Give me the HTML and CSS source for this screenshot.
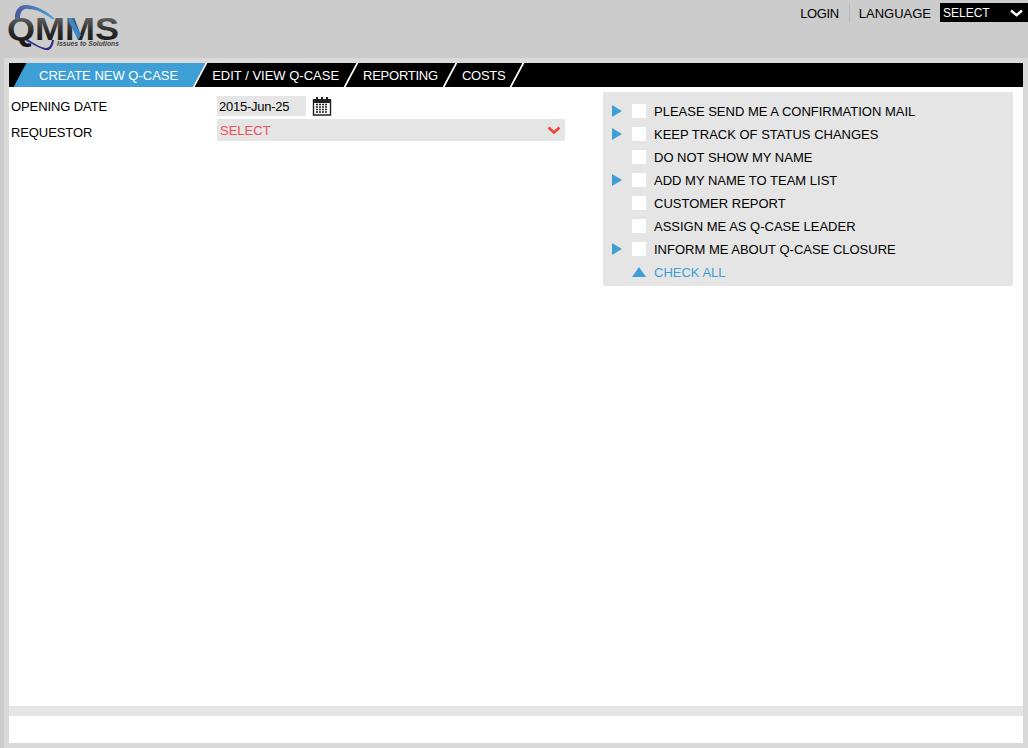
FILE: index.html
```html
<!DOCTYPE html>
<html>
<head>
<title>QMMS - Create new Q-Case</title>
<link rel="stylesheet" href="styles.css">
</head>
<body>
<div class="header">
<svg class="logo" width="125" height="52" viewBox="0 0 125 52">
<defs>
<linearGradient id="letters" x1="0" y1="0" x2="0" y2="1">
<stop offset="0" stop-color="#777"/>
<stop offset="0.55" stop-color="#2a2a2a"/>
<stop offset="1" stop-color="#111"/>
</linearGradient>
<linearGradient id="swoosh" x1="0" y1="0" x2="1" y2="0">
<stop offset="0" stop-color="#4a5a9c"/>
<stop offset="1" stop-color="#4aa3dc"/>
</linearGradient>
</defs>
<path d="M15 19C14 10 20 4 27 5C37 6 47 11 55 19L52 19C44 13 36 9 28 9C23 8 20 12 20 18Z" fill="url(#swoosh)"/>
<path d="M27 39C35 44 42 48 46 48C50 48 51 44 52 40L54 40C53 46 51 51 46 50C40 49 33 44 26 41Z" fill="#2c2f86"/>
<text class="logo-name" x="7" y="40" textLength="112" lengthAdjust="spacingAndGlyphs" fill="url(#letters)">QMMS</text>
<path d="M67 18L72 18L81 35L78 40Z" fill="#3f86c4"/>
<text class="logo-tag" x="57" y="45.5" textLength="62" lengthAdjust="spacingAndGlyphs">Issues to Solutions</text>
</svg>
<div class="top-links">
<a class="login">LOGIN</a>
<a class="language">LANGUAGE</a>
<div class="lang-select">
<span>SELECT</span>
<svg width="13" height="8" viewBox="0 0 13 8"><path d="M1 1.5L6.5 6.2L12 1.5" fill="none" stroke="#fff" stroke-width="2.4"/></svg>
</div>
</div>
</div>
<div class="page">
<div class="tabs">
<a class="tab active">CREATE NEW Q-CASE</a>
<a class="tab">EDIT / VIEW Q-CASE</a>
<a class="tab tab-short">REPORTING</a>
<a class="tab tab-short">COSTS</a>
</div>
<div class="content">
<div class="form">
<div class="form-row date-row">
<label>OPENING DATE</label>
<div class="date-field">2015-Jun-25</div>
<svg class="calendar" width="20" height="20" viewBox="0 0 20 20">
<path d="M1.5 4H18.5V19H1.5Z" fill="#fff" stroke="#222" stroke-width="1.4"/>
<path d="M1 3H19V7H1Z" fill="#222"/>
<path d="M5 1V5M10 1V5M15 1V5" stroke="#222" stroke-width="2"/>
<path d="M4 8.5H16M4 11H16M4 13.5H16M4 16H16" stroke="#222" stroke-width="1.5" stroke-dasharray="2 1"/>
</svg>
</div>
<div class="form-row">
<label class="low-label">REQUESTOR</label>
<div class="select-field">
<span>SELECT</span>
<svg width="14" height="9" viewBox="0 0 14 9"><path d="M1.5 1.5L7 6.5L12.5 1.5" fill="none" stroke="#f04438" stroke-width="2.6"/></svg>
</div>
</div>
</div>
<div class="options">
<div class="option"><i class="arrow"></i><b class="check"></b><span>PLEASE SEND ME A CONFIRMATION MAIL</span></div>
<div class="option"><i class="arrow"></i><b class="check"></b><span>KEEP TRACK OF STATUS CHANGES</span></div>
<div class="option"><i class="no-arrow"></i><b class="check"></b><span>DO NOT SHOW MY NAME</span></div>
<div class="option"><i class="arrow"></i><b class="check"></b><span>ADD MY NAME TO TEAM LIST</span></div>
<div class="option"><i class="no-arrow"></i><b class="check"></b><span>CUSTOMER REPORT</span></div>
<div class="option"><i class="no-arrow"></i><b class="check"></b><span>ASSIGN ME AS Q-CASE LEADER</span></div>
<div class="option"><i class="arrow"></i><b class="check"></b><span>INFORM ME ABOUT Q-CASE CLOSURE</span></div>
<div class="option check-all"><i class="no-arrow"></i><b class="up"></b><span>CHECK ALL</span></div>
</div>
</div>
<div class="divider"></div>
<div class="footer"></div>
</div>
</body>
</html>
```

FILE: styles.css
```css
html,body{
height:100%;
}
body{
margin:0;
background:#cccccc;
font-family:"Liberation Sans",Arial,sans-serif;
font-size:13px;
color:#000;
overflow:hidden;
}
.header{
height:58px;
display:flex;
justify-content:space-between;
}
.logo{
display:block;
}
.logo-name{
font-family:"Liberation Sans",Arial,sans-serif;
font-size:31px;
font-weight:bold;
}
.logo-tag{
font-family:"Liberation Sans",Arial,sans-serif;
font-size:7px;
font-weight:bold;
font-style:italic;
fill:#444;
}
.top-links{
display:flex;
height:19px;
margin-top:3px;
align-items:flex-start;
}
.login{
padding-right:10px;
border-right:1px solid #bbb;
height:19px;
line-height:21px;
letter-spacing:-0.4px;
}
.language{
margin-left:9px;
margin-right:9px;
height:19px;
line-height:21px;
}
.lang-select{
width:88px;
height:19px;
background:#000;
color:#fff;
font-size:12px;
display:flex;
align-items:center;
justify-content:space-between;
padding:0 5px 0 3px;
box-sizing:border-box;
}
.page{
margin-left:4px;
background:#d9d9d9;
padding:5px;
height:690px;
box-sizing:border-box;
display:flex;
flex-direction:column;
}
.tabs{
height:24px;
background:#000;
display:flex;
padding-left:11px;
overflow:hidden;
flex:none;
}
.tab{
position:relative;
color:#fff;
line-height:25px;
padding:0 11px;
}
.tab-short{
letter-spacing:-0.25px;
}
.tab::after{
content:"";
position:absolute;
top:0;
bottom:0;
right:-2px;
width:2px;
background:#fff;
transform:skewX(-28deg);
}
.tab + .tab{
margin-left:2px;
}
.tab.active{
padding:0 21px 0 19px;
z-index:0;
}
.tab.active::before{
content:"";
position:absolute;
top:0;
bottom:0;
left:0;
right:0;
background:#3d9fd6;
transform:skewX(-28deg);
z-index:-1;
}
.content{
flex:1;
background:#fff;
display:flex;
justify-content:space-between;
padding:5px 10px 0 2px;
}
.form{
width:556px;
padding-top:4px;
}
.form-row{
display:flex;
align-items:center;
margin-bottom:3px;
}
.form-row label{
width:206px;
letter-spacing:-0.1px;
}
.form-row .low-label{
padding-top:4px;
}
.date-field{
width:89px;
height:20px;
line-height:21px;
background:#e5e5e5;
padding-left:2px;
box-sizing:border-box;
letter-spacing:-0.25px;
}
.calendar{
margin-left:6px;
}
.select-field{
width:348px;
height:22px;
background:#e5e5e5;
color:#f0505a;
display:flex;
align-items:center;
justify-content:space-between;
padding:0 4px 0 3px;
box-sizing:border-box;
}
.options{
width:410px;
height:194px;
background:#e5e5e5;
padding-top:7px;
box-sizing:border-box;
}
.option{
height:23px;
display:flex;
align-items:center;
}
.option span{
padding-top:2px;
}
.arrow{
width:0;
height:0;
margin-left:9px;
border-left:10px solid #3d9fd6;
border-top:6px solid transparent;
border-bottom:6px solid transparent;
}
.no-arrow{
width:10px;
margin-left:9px;
}
.check{
width:14px;
height:14px;
background:#fff;
margin:0 8px 0 10px;
}
.up{
width:0;
height:0;
margin:0 8px 0 10px;
border-left:7px solid transparent;
border-right:7px solid transparent;
border-bottom:10px solid #3d9fd6;
}
.check-all{
color:#3d9fd6;
}
.divider{
height:10px;
background:#e5e5e5;
flex:none;
}
.footer{
height:27px;
background:#fff;
flex:none;
}
```
